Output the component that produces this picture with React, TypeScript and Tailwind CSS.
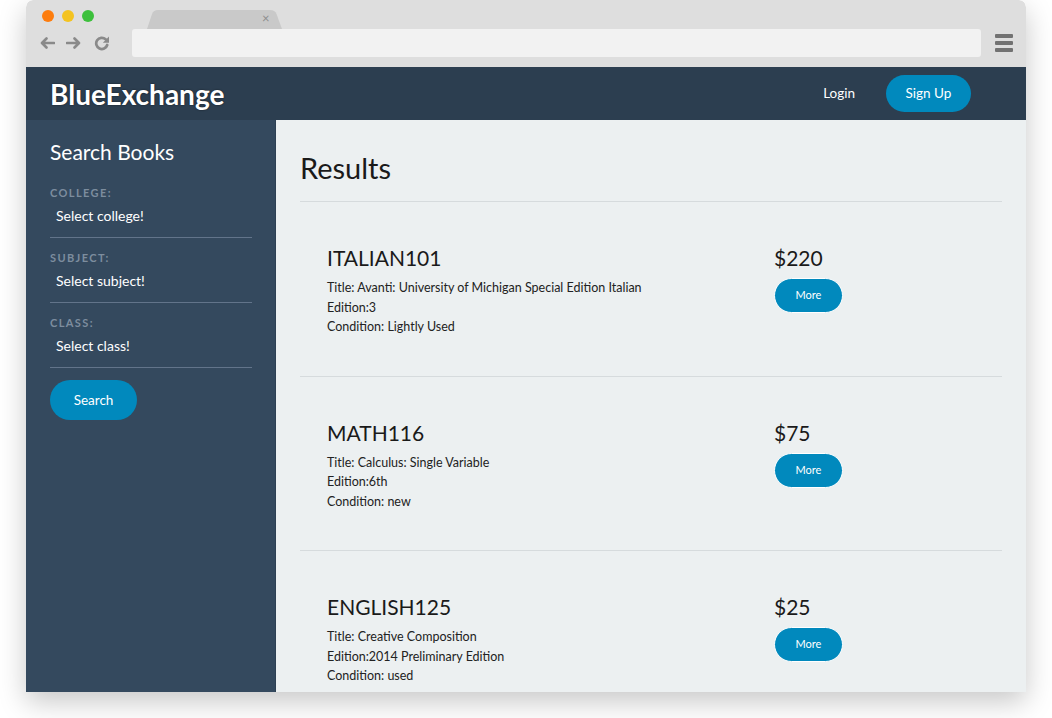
import React from 'react'

const books = [
  {
    code: 'ITALIAN101',
    title: 'Avanti: University of Michigan Special Edition Italian',
    edition: '3',
    condition: 'Lightly Used',
    price: '$220',
  },
  {
    code: 'MATH116',
    title: 'Calculus: Single Variable',
    edition: '6th',
    condition: 'new',
    price: '$75',
  },
  {
    code: 'ENGLISH125',
    title: 'Creative Composition',
    edition: '2014 Preliminary Edition',
    condition: 'used',
    price: '$25',
  },
]

const fields = [
  { label: 'COLLEGE:', placeholder: 'Select college!' },
  { label: 'SUBJECT:', placeholder: 'Select subject!' },
  { label: 'CLASS:', placeholder: 'Select class!' },
]

function BrowserChrome() {
  return (
    <div className="h-[67px] bg-[#dedede] rounded-t-[7px] flex flex-col">
      {/* traffic lights + tab */}
      <div className="h-[29px] flex items-end relative">
        <div className="absolute left-[16px] top-[10px] flex gap-[8px]">
          <span className="w-[12px] h-[12px] rounded-full bg-[#fd7d0e]" />
          <span className="w-[12px] h-[12px] rounded-full bg-[#f4c320]" />
          <span className="w-[12px] h-[12px] rounded-full bg-[#3dc03c]" />
        </div>
        <div className="ml-[121px] w-[135px] h-[19px] relative">
          <svg width="135" height="19" viewBox="0 0 135 19" className="absolute inset-0">
            <path d="M0 19 L5 4 Q6.5 0 11 0 H123 Q128 0 129.5 4 L135 19 Z" fill="#c9c9c9" />
          </svg>
          <span className="absolute left-[115px] top-[1px] text-[13px] leading-[14px] text-[#8e8e8e]">×</span>
        </div>
      </div>
      {/* nav row */}
      <div className="h-[28px] flex items-center">
        <svg width="15" height="12" viewBox="0 0 15 12" className="ml-[14px]">
          <path d="M14 6H2.5M6.5 1.5L2 6l4.5 4.5" fill="none" stroke="#8a8a8a" strokeWidth="2.6" strokeLinecap="round" strokeLinejoin="round" />
        </svg>
        <svg width="15" height="12" viewBox="0 0 15 12" className="ml-[11px]">
          <path d="M1 6h11.5M8.5 1.5L13 6l-4.5 4.5" fill="none" stroke="#8a8a8a" strokeWidth="2.6" strokeLinecap="round" strokeLinejoin="round" />
        </svg>
        <svg width="16" height="15" viewBox="0 0 16 15" className="ml-[13px]">
          <path d="M13.2 9A5.6 5.6 0 1 1 11.6 3.3" fill="none" stroke="#8a8a8a" strokeWidth="2.7" strokeLinecap="round" />
          <path d="M15 0.5v6.2H8.8z" fill="#8a8a8a" />
        </svg>
        <div className="ml-[22px] w-[849px] h-[28px] bg-[#f2f2f2] rounded-[3px]" />
        <div className="ml-[14px] flex flex-col gap-[2.7px]">
          <span className="w-[18px] h-[4px] rounded-[1px] bg-[#727272]" />
          <span className="w-[18px] h-[4px] rounded-[1px] bg-[#727272]" />
          <span className="w-[18px] h-[4px] rounded-[1px] bg-[#727272]" />
        </div>
      </div>
    </div>
  )
}

export default function App() {
  return (
    <div className="w-[1052px] h-[718px] bg-white font-[family-name:Lato,sans-serif] overflow-hidden">
      <div className="ml-[26px] w-[1000px] h-[692px] flex flex-col rounded-t-[7px] shadow-[0_10px_28px_rgba(0,0,0,0.22)] overflow-hidden">
        <BrowserChrome />

        {/* app header */}
        <header className="h-[53px] bg-[#2c3e50] flex items-center pl-[24px] pr-[55px]">
          <h1 className="text-white font-bold text-[28px] [text-shadow:0_0_2px_rgba(0,0,0,0.6)]">BlueExchange</h1>
          <div className="ml-auto flex items-center">
            <a className="text-white text-[13.5px]">Login</a>
            <button className="ml-[31px] w-[85px] h-[37px] rounded-full bg-[#0189bd] text-white text-[13.5px]">Sign Up</button>
          </div>
        </header>

        <div className="flex flex-1 min-h-0">
          {/* sidebar */}
          <aside className="w-[250px] bg-[#34495e] border-r border-[#2d4053] pl-[24px] pr-[23px] pt-[18px]">
            <h2 className="text-white text-[21px] leading-[28px]">Search Books</h2>
            <div className="mt-[20px] flex flex-col gap-[13px]">
              {fields.map((f) => (
                <div key={f.label}>
                  <div className="text-[11px] leading-[14px] font-bold tracking-[1.4px] text-[#7d8d9e]">{f.label}</div>
                  <div className="mt-[7px] pl-[6px] pb-[12px] text-white text-[14px] leading-[18px] border-b border-[#62748a]">{f.placeholder}</div>
                </div>
              ))}
            </div>
            <button className="mt-[12px] w-[87px] h-[40px] rounded-full bg-[#0189bd] text-white text-[13.5px]">Search</button>
          </aside>

          {/* results */}
          <main className="flex-1 bg-[#ecf0f1] px-[24px] pt-[30px]">
            <h2 className="text-[29px] leading-[36px] text-[#1a1a1a]">Results</h2>
            <div className="mt-[15px] border-t border-[#d6dbdd]">
              {books.map((b) => (
                <div key={b.code} className="flex pl-[27px] pt-[42px] pb-[39px] border-b border-[#d6dbdd]">
                  <div className="w-[448px]">
                    <div className="text-[21px] leading-[28px] text-[#1a1a1a]">{b.code}</div>
                    <div className="mt-[6px] text-[12.5px] leading-[19.5px] text-[#222]">
                      <div>Title: {b.title}</div>
                      <div>Edition:{b.edition}</div>
                      <div>Condition: {b.condition}</div>
                    </div>
                  </div>
                  <div className="-ml-[1px]">
                    <div className="text-[21px] leading-[28px] text-[#1a1a1a]">{b.price}</div>
                    <button className="mt-[6px] w-[69px] h-[35px] rounded-full bg-[#0189bd] border border-white text-white text-[11px]">More</button>
                  </div>
                </div>
              ))}
            </div>
          </main>
        </div>
      </div>
    </div>
  )
}
